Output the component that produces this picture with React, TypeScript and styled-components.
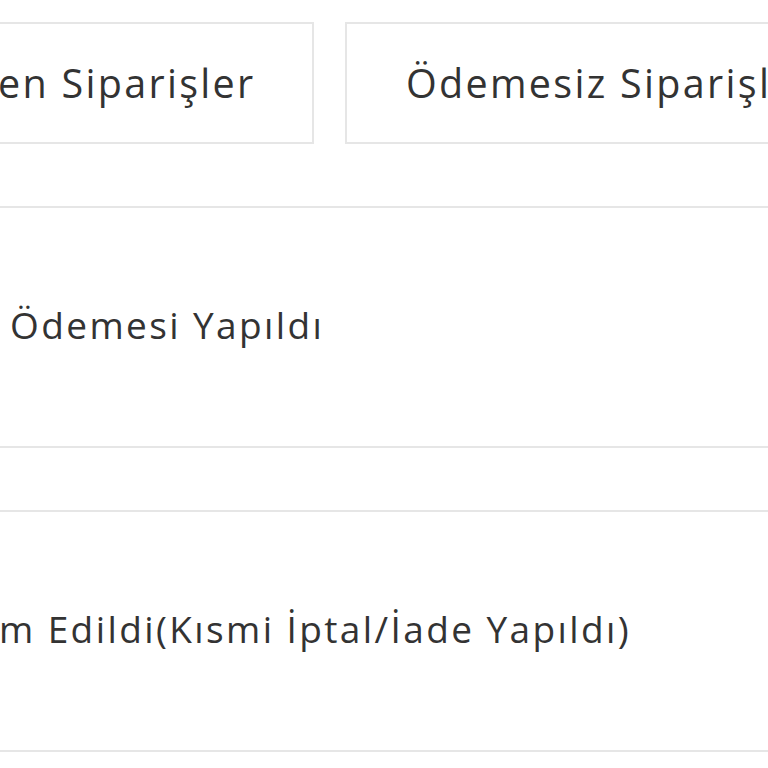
import React from "react";
import styled, { createGlobalStyle } from "styled-components";

const GlobalStyle = createGlobalStyle`
  html, body {
    margin: 0;
    padding: 0;
    background: #ffffff;
    overflow: hidden;
  }
  body {
    font-family: "Open Sans", "Liberation Sans", sans-serif;
    color: #333333;
  }
`;

const Page = styled.div`
  width: 100%;
  height: 768px;
  overflow: hidden;
  padding-top: 22px;
  box-sizing: border-box;
  display: flex;
  flex-direction: column;
  gap: 62px;
`;

const TabBar = styled.div`
  display: flex;
  gap: 31px;
  margin-left: -40px;
`;

const Tab = styled.div<{ $width: number; $indent: number }>`
  flex: 0 0 auto;
  box-sizing: border-box;
  width: ${(p) => p.$width}px;
  height: 122px;
  border: 2px solid #e6e6e6;
  display: flex;
  align-items: center;
  padding-left: ${(p) => p.$indent}px;
  font-size: 39.5px;
  letter-spacing: 2.3px;
  white-space: nowrap;
  overflow: hidden;
  color: #333333;
`;

const List = styled.div`
  display: flex;
  flex-direction: column;
  gap: 62px;
  margin-left: -40px;
  width: calc(100% + 80px);
`;

const Row = styled.div<{ $indent: number }>`
  box-sizing: border-box;
  height: 242px;
  border: 2px solid #e6e6e6;
  display: flex;
  align-items: center;
  padding-left: ${(p) => p.$indent}px;
  padding-bottom: 5px;
  font-size: 37px;
  letter-spacing: 2.4px;
  white-space: nowrap;
  color: #333333;
`;

export default function App() {
  return (
    <>
      <GlobalStyle />
      <Page>
        <TabBar>
          <Tab $width={354} $indent={36}>en Siparişler</Tab>
          <Tab $width={600} $indent={59}>Ödemesiz Siparişler</Tab>
        </TabBar>
        <List>
          <Row $indent={48}>Ödemesi Yapıldı</Row>
          <Row $indent={37}>m Edildi(Kısmi İptal/İade Yapıldı)</Row>
        </List>
      </Page>
    </>
  );
}
